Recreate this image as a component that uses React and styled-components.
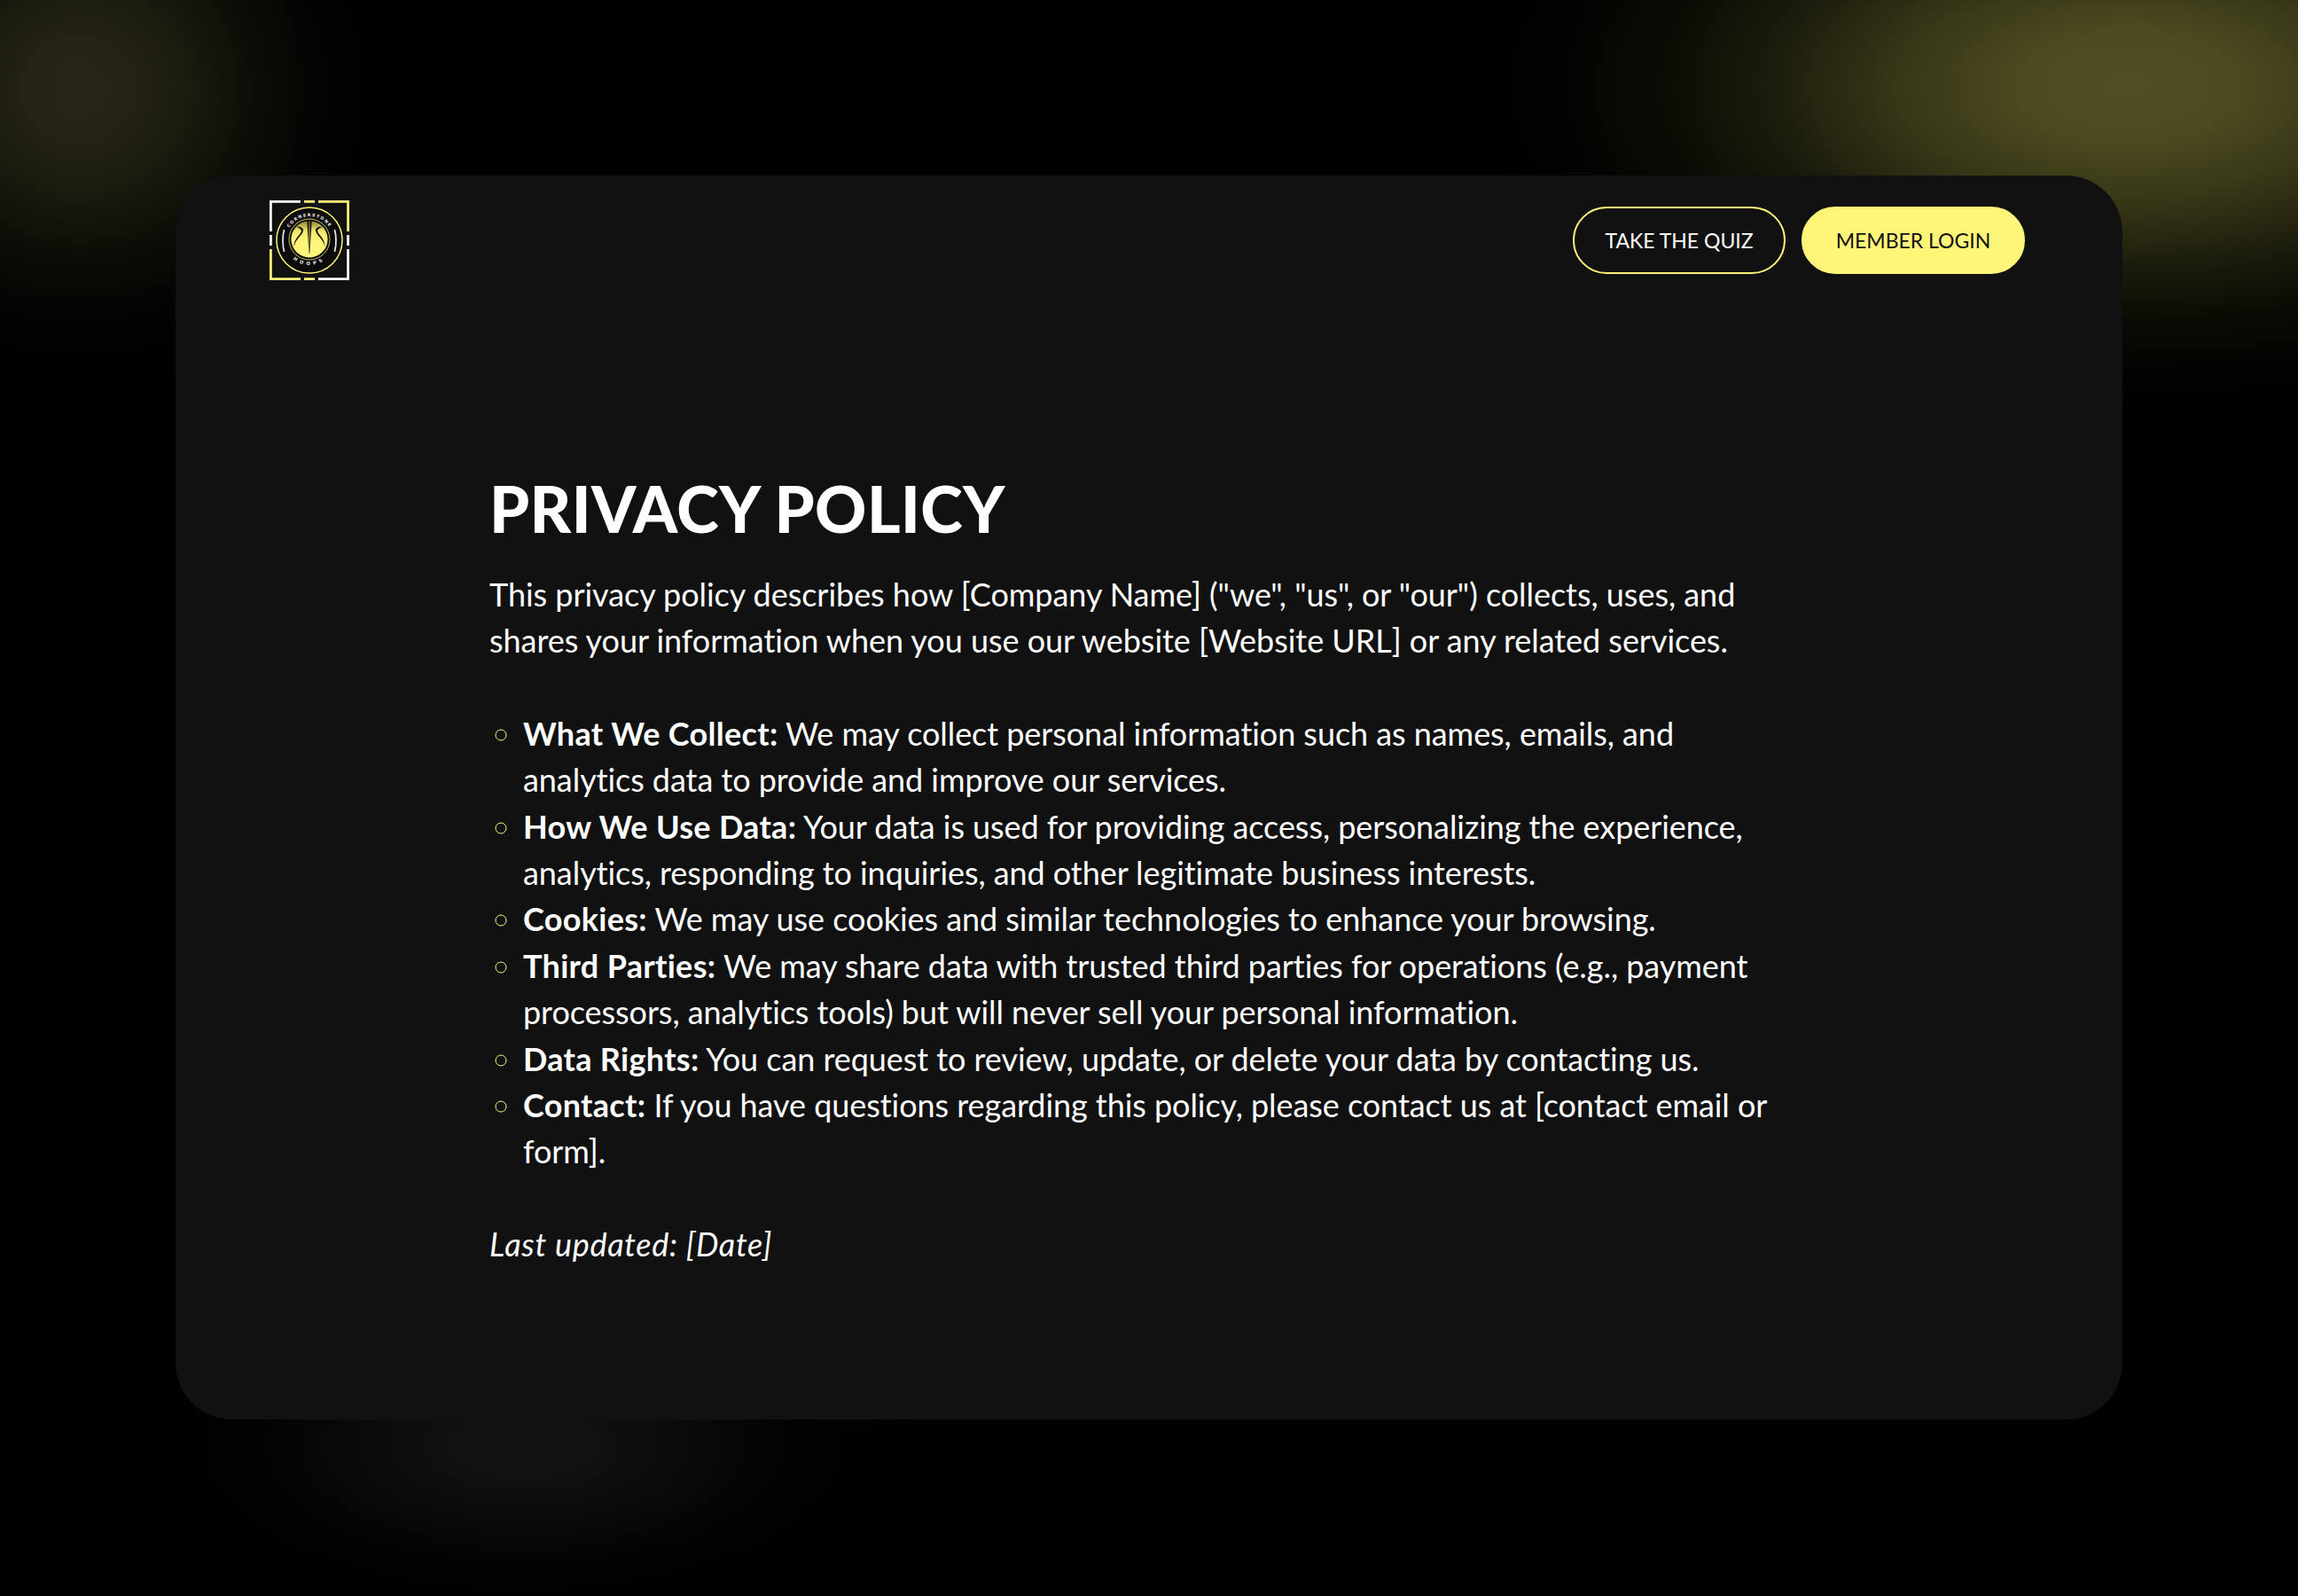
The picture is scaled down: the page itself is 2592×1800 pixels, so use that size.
import React from "react";
import styled, { createGlobalStyle } from "styled-components";

const Y = "#fff578";
const FONT = `"Lato", "Noto Sans", "Liberation Sans", sans-serif`;

const Global = createGlobalStyle`
  html, body { margin: 0; padding: 0; background: #000; }
  * { box-sizing: border-box; }
`;

const glow = (x, y, rx, ry, c) => `radial-gradient(ellipse ${rx}px ${ry}px at ${x}px ${y}px,
  rgba(${c},1) 0%, rgba(${c},.92) 18%, rgba(${c},.68) 36%, rgba(${c},.36) 54%, rgba(${c},.13) 72%, rgba(${c},.03) 88%, rgba(${c},0) 100%)`;

const Page = styled.div`
  width: 2592px;
  height: 1800px;
  padding: 198px 198px 0;
  font-family: ${FONT};
  font-variant-ligatures: none;
  color: #fff;
  background-color: #000;
  background-image:
    ${glow(2400, 97, 740, 370, "80,79,34")},
    ${glow(90, 100, 360, 340, "38,37,21")},
    ${glow(590, 1630, 440, 200, "18,18,18")};
`;

const Card = styled.div`
  width: 2196px;
  height: 1403px;
  background: #111;
  border-radius: 64px;
`;

const Header = styled.header`
  display: flex;
  align-items: center;
  justify-content: space-between;
  padding: 28px 110px 0 106px;
`;

const Logo = styled.svg`
  display: block;
  width: 90px;
  height: 90px;
`;

const Actions = styled.nav`
  display: flex;
  gap: 18px;
`;

const Button = styled.a`
  display: flex;
  align-items: center;
  justify-content: center;
  height: 76px;
  width: ${(p) => (p.$solid ? 252 : 240)}px;
  border-radius: 38px;
  font-size: 23px;
  color: ${(p) => (p.$solid ? "#111" : "#fff")};
  background: ${(p) => (p.$solid ? Y : "transparent")};
  border: 2px solid ${Y};
`;

const Main = styled.main`
  padding: 214px 374px 0 354px;
`;

const Title = styled.h1`
  margin: 0 0 28px;
  font-size: 72px;
  line-height: 86px;
  font-weight: 900;
  letter-spacing: 0.45px;
  color: #fff;
`;

const Para = styled.p`
  margin: 0 0 52px;
  font-size: 36px;
  line-height: 52.4px;
  letter-spacing: ${(p) => (p.$italic ? "0.7px" : "-0.04px")};
  font-style: ${(p) => (p.$italic ? "italic" : "normal")};
`;

const List = styled.ul`
  margin: 0 0 52px;
  padding: 0 0 0 38px;
  list-style: circle;
  font-size: 36px;
  line-height: 52.4px;
  letter-spacing: -0.06px;
  li::marker { color: ${Y}; }
`;

const Strong = styled.b`
  font-weight: 700;
  letter-spacing: 0.3px;
`;

const LogoMark = () => (
  <Logo viewBox="0 0 90 90" aria-label="Cornerstone Hoops">
    <defs>
      <linearGradient id="ball" x1="0" y1="0" x2="0" y2="1">
        <stop offset="0" stopColor="#8f8534" />
        <stop offset=".28" stopColor="#f2e66a" />
        <stop offset=".5" stopColor={Y} />
        <stop offset="1" stopColor={Y} />
      </linearGradient>
      <path id="topArc" d="M 18 45 A 27 27 0 0 1 72 45" />
      <path id="botArc" d="M 17 45 A 28 28 0 0 0 73 45" />
    </defs>
    <g fill="none" strokeWidth="2.8">
      <path d="M1.4 35V1.4H35M1.4 39V51" stroke="#fff" />
      <path d="M39 1.4H51M55 1.4H88.6V35" stroke={Y} />
      <path d="M88.6 39V51M88.6 55V88.6H55" stroke="#fff" />
      <path d="M51 88.6H39M35 88.6H1.4V55" stroke={Y} />
    </g>
    <circle cx="45" cy="45" r="37" fill="#0b0b0b" stroke={Y} strokeWidth="1.5" />
    <circle cx="45" cy="44" r="23" fill="none" stroke={Y} strokeWidth=".8" />
    <circle cx="45" cy="43.8" r="20.6" fill="url(#ball)" />
    <path d="M16.5 33Q13.5 45 16.5 58M73.5 33Q76.5 45 73.5 58" fill="none" stroke="#e8e8e8" strokeWidth="1.7" />
    <path d="M42.4 22.5L44.4 22.5L44.7 60L44.4 60ZM45.6 22.5L47.6 22.5L45.4 60L45.1 60Z" fill="#0b0b0b" />
    <path d="M30 29.5C33 29 37 30 38 33C38.5 37 33 41 30 46C29 48 28 50 27.5 52.5C27.5 47 30 43 32.5 40C35 37 36.5 35 35.8 33.5C35 31.5 32 30.5 30 29.5Z" fill="#0b0b0b" />
    <path d="M60 29.5C57 29 53 30 52 33C51.5 37 57 41 60 46C61 48 62 50 62.5 52.5C62.5 47 60 43 57.5 40C55 37 53.5 35 54.2 33.5C55 31.5 58 30.5 60 29.5Z" fill="#0b0b0b" />
    <g fontFamily='"DejaVu Sans", sans-serif' fontWeight="700" fill="#eee">
      <text fontSize="4.7" letterSpacing="1.4">
        <textPath href="#topArc" startOffset="50%" textAnchor="middle">CORNERSTONE</textPath>
      </text>
      <text fontSize="5.2" letterSpacing="3.8">
        <textPath href="#botArc" startOffset="50%" textAnchor="middle">HOOPS</textPath>
      </text>
    </g>
  </Logo>
);

export default function App() {
  return (
    <Page>
      <Global />
      <Card>
        <Header>
          <LogoMark />
          <Actions>
            <Button>TAKE THE QUIZ</Button>
            <Button $solid>MEMBER LOGIN</Button>
          </Actions>
        </Header>
        <Main>
          <Title>PRIVACY POLICY</Title>
          <Para>
            This privacy policy describes how [Company Name] ("we", "us", or "our") collects, uses, and shares your
            information when you use our website [Website URL] or any related services.
          </Para>
          <List>
            <li><Strong>What We Collect:</Strong> We may collect personal information such as names, emails, and analytics data to provide and improve our services.</li>
            <li><Strong>How We Use Data:</Strong> Your data is used for providing access, personalizing the experience, analytics, responding to inquiries, and other legitimate business interests.</li>
            <li><Strong>Cookies:</Strong> We may use cookies and similar technologies to enhance your browsing.</li>
            <li><Strong>Third Parties:</Strong> We may share data with trusted third parties for operations (e.g., payment processors, analytics tools) but will never sell your personal information.</li>
            <li><Strong>Data Rights:</Strong> You can request to review, update, or delete your data by contacting us.</li>
            <li><Strong>Contact:</Strong> If you have questions regarding this policy, please contact us at [contact email or form].</li>
          </List>
          <Para $italic>Last updated: [Date]</Para>
        </Main>
      </Card>
    </Page>
  );
}
